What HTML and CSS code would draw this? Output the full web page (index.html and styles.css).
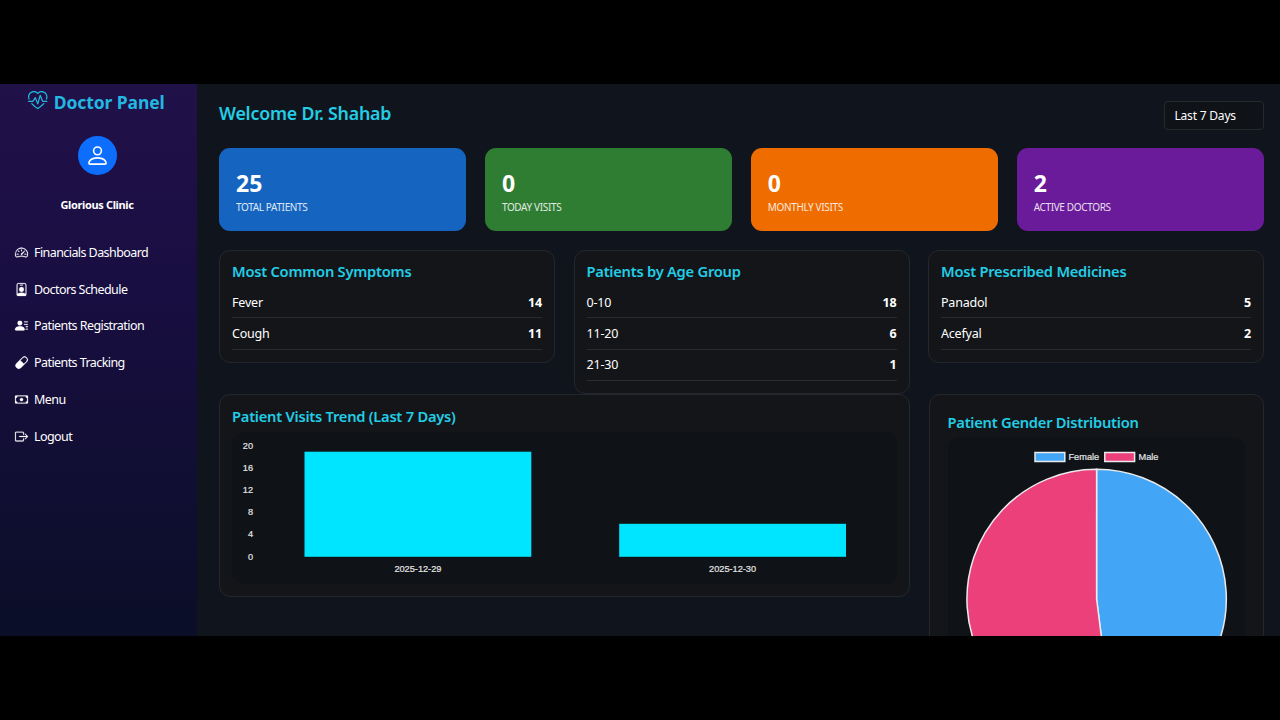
FILE: index.html
```html
<!DOCTYPE html>
<html lang="en">
<head>
<meta charset="utf-8">
<title>Doctor Panel</title>
<link rel="stylesheet" href="styles.css">
</head>
<body>
<div class="app">
  <aside class="sidebar">
    <div class="brand">
      <svg class="brand-icon" viewBox="0 0 16 16"><path d="m8 2.748-.717-.737C5.6.281 2.514.878 1.4 3.053.918 3.995.78 5.323 1.508 7H.43c-2.128-5.697 4.165-8.83 7.394-5.857q.09.083.176.171a3 3 0 0 1 .176-.17c3.23-2.974 9.522.159 7.394 5.856h-1.078c.728-1.677.59-3.005.108-3.947C13.486.878 10.4.28 8.717 2.01zM2.212 10h1.315C4.593 11.183 6.05 12.458 8 13.795c1.949-1.337 3.407-2.612 4.473-3.795h1.315c-1.265 1.566-3.14 3.25-5.788 5-2.648-1.75-4.523-3.434-5.788-5"/><path d="M10.464 3.314a.5.5 0 0 0-.945.049L7.921 8.956 6.464 5.314a.5.5 0 0 0-.88-.091L3.732 8H.5a.5.5 0 0 0 0 1H4a.5.5 0 0 0 .416-.223l1.473-2.209 1.647 4.118a.5.5 0 0 0 .945-.049l1.598-5.593 1.457 3.642A.5.5 0 0 0 12 9h3.5a.5.5 0 0 0 0-1h-3.162z"/></svg>
      <span>Doctor Panel</span>
    </div>
    <div class="avatar">
      <svg viewBox="0 0 16 16"><path d="M8 8a3 3 0 1 0 0-6 3 3 0 0 0 0 6m2-3a2 2 0 1 1-4 0 2 2 0 0 1 4 0m4 8c0 1-1 1-1 1H3s-1 0-1-1 1-4 6-4 6 3 6 4m-1-.004c-.001-.246-.154-.986-.832-1.664C11.516 10.68 10.289 10 8 10s-3.516.68-4.168 1.332c-.678.678-.83 1.418-.832 1.664z"/></svg>
    </div>
    <div class="clinic"><span>Glorious Clinic</span></div>
    <nav class="menu">
      <a><svg viewBox="0 0 16 16"><path d="M8 4a.5.5 0 0 1 .5.5V6a.5.5 0 0 1-1 0V4.5A.5.5 0 0 1 8 4M3.732 5.732a.5.5 0 0 1 .707 0l.915.914a.5.5 0 1 1-.708.708l-.914-.915a.5.5 0 0 1 0-.707M2 10a.5.5 0 0 1 .5-.5h1.586a.5.5 0 0 1 0 1H2.5A.5.5 0 0 1 2 10m9.5 0a.5.5 0 0 1 .5-.5h1.5a.5.5 0 0 1 0 1H12a.5.5 0 0 1-.5-.5m.754-4.246a.39.39 0 0 0-.527-.02L7.547 9.31a.91.91 0 1 0 1.302 1.258l3.434-4.297a.39.39 0 0 0-.029-.518z"/><path d="M0 10a8 8 0 1 1 15.547 2.661c-.442 1.253-1.845 1.602-2.932 1.25C11.309 13.488 9.475 13 8 13c-1.474 0-3.31.488-4.615.911-1.087.352-2.49.003-2.932-1.25A8 8 0 0 1 0 10m8-7a7 7 0 0 0-6.603 9.329c.203.575.923.876 1.68.63C4.397 12.533 6.358 12 8 12s3.604.532 4.923.96c.757.245 1.477-.056 1.68-.631A7 7 0 0 0 8 3"/></svg><span>Financials Dashboard</span></a>
      <a><svg viewBox="0 0 16 16"><path d="M6.5 2a.5.5 0 0 0 0 1h3a.5.5 0 0 0 0-1zM11 8a3 3 0 1 1-6 0 3 3 0 0 1 6 0"/><path d="M4.500 0A2.500 2.500 0 0 0 2 2.500V14a2 2 0 0 0 2 2h8a2 2 0 0 0 2-2V2.500A2.500 2.500 0 0 0 11.500 0zM3 2.500A1.500 1.500 0 0 1 4.500 1h7A1.500 1.500 0 0 1 13 2.500v10.795a4.200 4.200 0 0 0-.776-.492C11.392 12.387 10.063 12 8 12s-3.392.387-4.224.803a4.200 4.200 0 0 0-.776.492z"/></svg><span>Doctors Schedule</span></a>
      <a><svg viewBox="0 0 16 16"><path d="M6 8a3 3 0 1 0 0-6 3 3 0 0 0 0 6m-5 6s-1 0-1-1 1-4 6-4 6 3 6 4-1 1-1 1zM11 3.500a.5.5 0 0 1 .5-.5h4a.5.5 0 0 1 0 1h-4a.5.5 0 0 1-.5-.5m.5 2.500a.5.5 0 0 0 0 1h4a.5.5 0 0 0 0-1zm2 3a.5.5 0 0 0 0 1h2a.5.5 0 0 0 0-1zm0 3a.5.5 0 0 0 0 1h2a.5.5 0 0 0 0-1z"/></svg><span>Patients Registration</span></a>
      <a><svg viewBox="0 0 16 16"><path d="M1.828 8.900 8.900 1.827a4 4 0 1 1 5.657 5.657l-7.070 7.071A4 4 0 1 1 1.827 8.900Zm9.128.771 2.893-2.893a3 3 0 1 0-4.243-4.242L6.713 5.429z"/></svg><span>Patients Tracking</span></a>
      <a><svg viewBox="0 0 16 16"><path d="M8 10a2 2 0 1 0 0-4 2 2 0 0 0 0 4"/><path fill-rule="evenodd" d="M0 4a1 1 0 0 1 1-1h14a1 1 0 0 1 1 1v8a1 1 0 0 1-1 1H1a1 1 0 0 1-1-1zm3 0a2 2 0 0 1-2 2v4a2 2 0 0 1 2 2h10a2 2 0 0 1 2-2V6a2 2 0 0 1-2-2z"/></svg><span>Menu</span></a>
      <a><svg viewBox="0 0 16 16"><path d="M10 12.500a.5.5 0 0 1-.5.5h-8a.5.5 0 0 1-.5-.5v-9a.5.5 0 0 1 .5-.5h8a.5.5 0 0 1 .5.5v2a.5.5 0 0 0 1 0v-2A1.500 1.500 0 0 0 9.500 2h-8A1.500 1.500 0 0 0 0 3.500v9A1.500 1.500 0 0 0 1.500 14h8a1.500 1.500 0 0 0 1.500-1.500v-2a.5.5 0 0 0-1 0z"/><path d="M15.854 8.354a.5.5 0 0 0 0-.708l-3-3a.5.5 0 0 0-.708.708L14.293 7.500H5.500a.5.5 0 0 0 0 1h8.793l-2.147 2.146a.5.5 0 0 0 .708.708z"/></svg><span>Logout</span></a>
    </nav>
  </aside>

  <main class="main">
    <header class="topbar">
      <h1>Welcome Dr. Shahab</h1>
      <div class="select"><span>Last 7 Days</span></div>
    </header>

    <section class="stats">
      <div class="stat blue"><b>25</b><span>TOTAL PATIENTS</span></div>
      <div class="stat green"><b>0</b><span>TODAY VISITS</span></div>
      <div class="stat orange"><b>0</b><span>MONTHLY VISITS</span></div>
      <div class="stat purple"><b>2</b><span>ACTIVE DOCTORS</span></div>
    </section>

    <section class="lists">
      <div class="panel">
        <h2>Most Common Symptoms</h2>
        <div class="row"><span>Fever</span><b>14</b></div>
        <div class="row"><span>Cough</span><b>11</b></div>
      </div>
      <div class="panel">
        <h2>Patients by Age Group</h2>
        <div class="row"><span>0-10</span><b>18</b></div>
        <div class="row"><span>11-20</span><b>6</b></div>
        <div class="row"><span>21-30</span><b>1</b></div>
      </div>
      <div class="panel">
        <h2>Most Prescribed Medicines</h2>
        <div class="row"><span>Panadol</span><b>5</b></div>
        <div class="row"><span>Acefyal</span><b>2</b></div>
      </div>
    </section>

    <section class="charts">
      <div class="panel trend">
        <h2>Patient Visits Trend (Last 7 Days)</h2>
        <svg class="canvas chart-text" width="665" height="152" viewBox="232 432 665 152">
          <g text-anchor="end">
            <text x="253" y="448.500">20</text>
            <text x="253" y="471">16</text>
            <text x="253" y="493">12</text>
            <text x="253" y="515">8</text>
            <text x="253" y="537">4</text>
            <text x="253" y="559.500">0</text>
          </g>
          <rect class="bar" x="304.500" y="451.700" width="226.800" height="105.100"/>
          <rect class="bar" x="619.200" y="523.800" width="226.800" height="33"/>
          <g text-anchor="middle">
            <text x="417.900" y="571.800">2025-12-29</text>
            <text x="732.600" y="571.800">2025-12-30</text>
          </g>
        </svg>
      </div>
      <div class="panel gender">
        <h2>Patient Gender Distribution</h2>
        <svg class="canvas chart-text" width="297" height="297" viewBox="948 437 297 297">
          <g stroke="#e8eaec" stroke-width="1.500">
            <rect class="female" x="1035" y="452.500" width="29.800" height="9"/>
            <rect class="male" x="1104.800" y="452.500" width="29.800" height="9"/>
            <path class="female" d="M1096.600 599V469.300A129.700 129.700 0 0 1 1112.860 727.680Z"/>
            <path class="male" d="M1096.600 599L1112.860 727.680A129.700 129.700 0 1 1 1096.600 469.300Z"/>
          </g>
          <text x="1068.500" y="459.800">Female</text>
          <text x="1138.500" y="459.800">Male</text>
        </svg>
      </div>
    </section>
  </main>
</div>
</body>
</html>
```
FILE: styles.css
```css
* { box-sizing: border-box; }

body {
  margin: 0;
  height: 720px;
  padding: 84px 0;
  overflow: hidden;
  background: #000;
  color: #fff;
  font-family: "Noto Sans", "Open Sans", sans-serif;
  font-size: 12.5px;
}

h1, h2 { margin: 0; font-weight: 600; color: #22cde6; white-space: nowrap; }

.app { display: flex; height: 552px; overflow: hidden; background: #10141c; }

.sidebar {
  flex: none;
  width: 197px;
  padding-right: 3px;
  display: flex;
  flex-direction: column;
  align-items: center;
  background: linear-gradient(#211149, #190e42 35%, #0a0e27);
}
.brand {
  display: flex;
  align-items: center;
  gap: 6px;
  height: 36px;
  margin-left: -1px;
  color: #22b8e0;
  font-size: 17.500px;
  font-weight: 700;
  white-space: nowrap;
  letter-spacing: -0.1px;
}
.brand-icon { width: 19.500px; height: 19.500px; margin-bottom: 2px; fill: currentColor; }
.avatar {
  display: flex;
  align-items: center;
  justify-content: center;
  width: 39px;
  height: 39px;
  margin-top: 16px;
  border-radius: 50%;
  background: #0d6efd;
}
.avatar svg { width: 25px; height: 25px; fill: #fff; }
.clinic { margin-top: 20px; height: 20px; line-height: 19px; font-size: 11px; font-weight: 700; letter-spacing: -0.35px; }
.menu { align-self: stretch; padding: 19px 0 0 15px; }
.menu a { display: flex; align-items: center; gap: 6px; height: 36.800px; letter-spacing: -0.570px; }
.menu svg { width: 13px; height: 13px; fill: #fff; stroke: #fff; stroke-width: 0.25px; overflow: visible; }

.main { flex: 1; padding: 17px 16px 0 22px; }
.topbar { display: flex; justify-content: space-between; align-items: flex-start; height: 47px; }
.topbar h1 { font-size: 17.800px; line-height: 24px; letter-spacing: -0.2px; }
.select {
  width: 100px;
  height: 29px;
  padding-left: 9.500px;
  border: 1px solid #262a30;
  border-radius: 4px;
  background: #0f1217;
  font-size: 12px;
  line-height: 28px;
  letter-spacing: -0.2px;
}

.stats { display: grid; grid-template-columns: repeat(4, 1fr); gap: 18.500px; }
.stat { display: flex; flex-direction: column; height: 83px; padding: 20px 17px 0; border-radius: 11px; }
.stat b { font-size: 23px; line-height: 30px; }
.stat span { font-size: 10px; line-height: 18px; letter-spacing: -0.350px; opacity: 0.85; }
.blue { background: #1565c0; }
.green { background: #2e7d32; }
.orange { background: #ef6c00; }
.purple { background: #6a1b9a; }

.lists { display: grid; grid-template-columns: repeat(3, 1fr); align-items: start; gap: 18.500px; margin-top: 18.500px; }
.panel { padding: 12px; border: 1px solid #23272d; border-radius: 11px; background: #141518; }
.panel h2 { font-size: 14.700px; line-height: 20px; letter-spacing: -0.250px; }
.lists .panel { padding-top: 10px; }
.lists .panel h2 { margin-bottom: 6.500px; }
.row {
  display: flex;
  justify-content: space-between;
  align-items: center;
  height: 31.300px;
  border-bottom: 1px solid #292b2f;
  letter-spacing: -0.2px;
}

.charts { display: grid; grid-template-columns: 691px 1fr; align-items: start; gap: 18.500px; }
.canvas { display: block; border-radius: 12px; background: #0f1216; }
.trend { padding-top: 11px; }
.trend h2 { margin-bottom: 6.600px; }
.gender { padding: 17.500px 18px; }
.gender h2 { margin-bottom: 5px; }
.chart-text { font-family: "Liberation Sans", Arial, sans-serif; font-size: 9.200px; }
.chart-text text { fill: #e6e6e6; stroke: #e6e6e6; stroke-width: 0.2px; }
.bar { fill: #00e5ff; }
.female { fill: #42a5f5; }
.male { fill: #ec407a; }
```
